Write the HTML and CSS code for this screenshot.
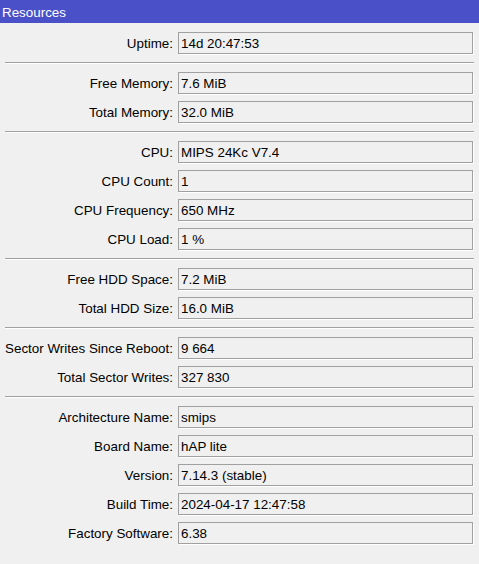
FILE: index.html
```html
<!DOCTYPE html>
<html>
<head>
<meta charset="utf-8">
<link rel="stylesheet" href="styles.css">
</head>
<body>
<div class="titlebar">Resources</div>
<div class="content">
  <div class="group">
    <div class="row"><span class="label">Uptime:</span><span class="field">14d 20:47:53</span></div>
  </div>
  <div class="sep"></div>
  <div class="group">
    <div class="row"><span class="label">Free Memory:</span><span class="field">7.6 MiB</span></div>
    <div class="row"><span class="label">Total Memory:</span><span class="field">32.0 MiB</span></div>
  </div>
  <div class="sep"></div>
  <div class="group">
    <div class="row"><span class="label">CPU:</span><span class="field">MIPS 24Kc V7.4</span></div>
    <div class="row"><span class="label">CPU Count:</span><span class="field">1</span></div>
    <div class="row"><span class="label">CPU Frequency:</span><span class="field">650 MHz</span></div>
    <div class="row"><span class="label">CPU Load:</span><span class="field">1 %</span></div>
  </div>
  <div class="sep"></div>
  <div class="group">
    <div class="row"><span class="label">Free HDD Space:</span><span class="field">7.2 MiB</span></div>
    <div class="row"><span class="label">Total HDD Size:</span><span class="field">16.0 MiB</span></div>
  </div>
  <div class="sep"></div>
  <div class="group">
    <div class="row"><span class="label">Sector Writes Since Reboot:</span><span class="field">9 664</span></div>
    <div class="row"><span class="label">Total Sector Writes:</span><span class="field">327 830</span></div>
  </div>
  <div class="sep"></div>
  <div class="group">
    <div class="row"><span class="label">Architecture Name:</span><span class="field">smips</span></div>
    <div class="row"><span class="label">Board Name:</span><span class="field">hAP lite</span></div>
    <div class="row"><span class="label">Version:</span><span class="field">7.14.3 (stable)</span></div>
    <div class="row"><span class="label">Build Time:</span><span class="field">2024-04-17 12:47:58</span></div>
    <div class="row"><span class="label">Factory Software:</span><span class="field">6.38</span></div>
  </div>
</div>
</body>
</html>
```
FILE: styles.css
```css
html, body {
  margin: 0;
  padding: 0;
  background: #f0f0f0;
  width: 479px;
  height: 564px;
  overflow: hidden;
  font-family: "Liberation Sans", Arial, sans-serif;
  font-size: 13.4px;
  color: #000;
}
.titlebar {
  height: 23px;
  background: #4a50c8;
  color: #fff;
  padding-left: 2px;
  line-height: 26px;
  font-size: 13.4px;
}
.content {
  padding: 9px 5px 0 4px;
  display: flex;
  flex-direction: column;
}
.group {
  display: flex;
  flex-direction: column;
  gap: 7px;
}
.row {
  display: grid;
  grid-template-columns: 169px 1fr;
  column-gap: 5px;
  align-items: center;
  height: 22px;
}
.label {
  text-align: right;
  white-space: nowrap;
}
.field {
  height: 20px;
  line-height: 21px;
  border: 1px solid #a0a0a0;
  box-shadow: 1px 1px 0 #fff;
  padding-left: 2px;
  margin-right: 1px;
  white-space: nowrap;
}
.sep {
  height: 1px;
  background: #a0a0a0;
  border-bottom: 1px solid #fff;
  margin: 8px 0 8px 1px;
}
```
